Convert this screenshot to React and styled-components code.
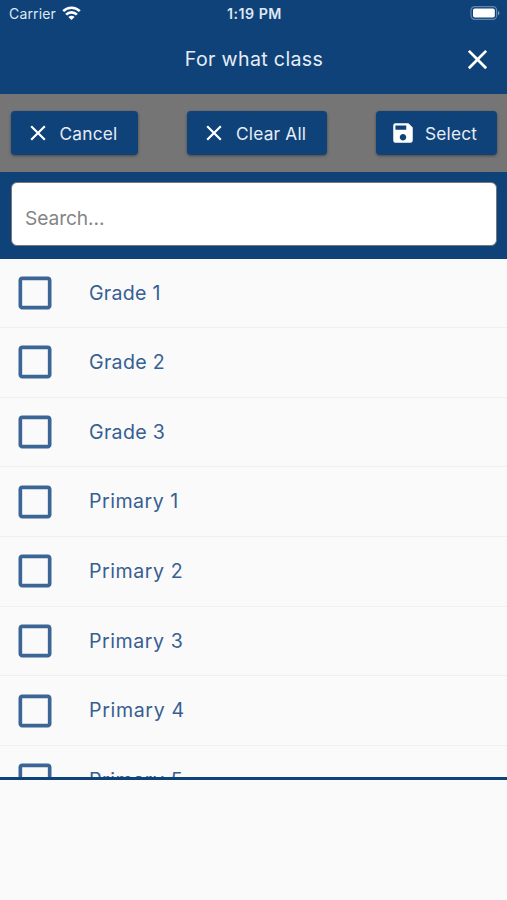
import styled, {createGlobalStyle} from "styled-components"
import {MdClose, MdSave, MdCheckBoxOutlineBlank} from "react-icons/md"


const blue = "#10427a"

const GlobalStyle = createGlobalStyle`
    * {
        box-sizing: border-box;
    }

    body {
        margin: 0;
        background: #fafafa;
        font-family: Inter, "Liberation Sans", sans-serif;
    }

    svg {
        display: block;
        flex: none;
    }
`

const Screen = styled.div`
    display: flex;
    flex-direction: column;
    width: 507px;
    height: 900px;
    overflow: hidden;
    background: #fafafa;
`

const StatusBar = styled.div`
    display: grid;
    grid-template-columns: 1fr auto 1fr;
    align-items: center;
    height: 26px;
    padding: 0 7px 0 9px;
    background: ${blue};
    color: #dfe8f3;
`

const Carrier = styled.div`
    display: flex;
    align-items: center;
    gap: 6px;
    font-size: 14px;
    letter-spacing: 0.15px;
`

const Clock = styled.div`
    font-size: 14.2px;
    font-weight: 600;
    letter-spacing: 0.5px;
`

const BatterySlot = styled.div`
    justify-self: end;
`

const Header = styled.header`
    display: grid;
    grid-template-columns: 32px 1fr 32px;
    align-items: center;
    height: 68px;
    padding: 0 14px 2px 13px;
    background: ${blue};
    color: #fff;
`

const Title = styled.h1`
    grid-column: 2;
    margin: 0;
    padding: 0 0 1px 2px;
    text-align: center;
    color: #e6edf5;
    font-size: 19.6px;
    font-weight: 400;
    line-height: 24px;
    letter-spacing: 0.35px;
`

const Toolbar = styled.div`
    display: flex;
    justify-content: space-between;
    align-items: flex-start;
    height: 78px;
    padding: 17px 10px 0 11px;
    background: #757575;
`

const Button = styled.button`
    display: flex;
    align-items: center;
    gap: 9px;
    width: ${props => props.$width}px;
    height: 44px;
    padding: 0 0 0 ${props => props.$inset || 14}px;
    border: 0;
    border-radius: 4px;
    background: ${blue};
    box-shadow: 0 1px 3px rgba(0, 0, 0, 0.4);
    color: #fff;
    font: inherit;
    font-size: 17.3px;
    letter-spacing: 0.2px;
    white-space: nowrap;

    span {
        color: #e6edf5;
    }
`

const SearchBar = styled.div`
    height: 87px;
    padding: 10px 10px 0 11px;
    background: ${blue};
`

const SearchInput = styled.input`
    display: block;
    width: 100%;
    height: 64px;
    padding: 8px 13px 0;
    border: 1px solid #76777a;
    border-radius: 6px;
    background: #fff;
    color: #333;
    font: inherit;
    font-size: 19.2px;
    letter-spacing: -0.1px;
    outline: none;

    &::placeholder {
        color: #858585;
        opacity: 1;
    }
`

const List = styled.ul`
    height: 521px;
    margin: 0;
    padding: 0;
    list-style: none;
    overflow: hidden;
    border-bottom: 3px solid ${blue};
`

const Row = styled.li`
    display: flex;
    align-items: center;
    gap: 32px;
    height: 69.7px;
    padding: 0 13px;
    border-bottom: 1px solid #f0f0f0;
    color: #3a6594;

    &:first-child {
        height: 69px;
    }
`

const Label = styled.span`
    padding-bottom: 1px;
    color: #375f92;
    font-size: 19.6px;
    line-height: 24px;
    letter-spacing: ${props => props.$spacing}px;
`

function WifiIcon() {
    return (
        <svg width="19" height="14" viewBox="0 0 19 14" fill="none" stroke="#fff" strokeWidth="2.6">
            <path d="M1.2 5.2a11.8 11.8 0 0 1 16.6 0"/>
            <path d="M4.1 8.6a7.6 7.6 0 0 1 10.8 0"/>
            <path d="M9.5 13.9 6.4 11a4.3 4.3 0 0 1 6.2 0z" fill="#fff" stroke="none"/>
        </svg>
    )
}

function BatteryIcon() {
    return (
        <svg width="30" height="14" viewBox="0 0 30 14">
            <rect x="1" y="0.7" width="25.6" height="12.6" rx="3.6" fill="none" stroke="#6485ad" strokeWidth="1.2"/>
            <rect x="3" y="2.5" width="21.8" height="9" rx="1.8" fill="#fff"/>
            <path d="M28 4.7c1.9.8 1.9 3.8 0 4.6z" fill="#7f9bbc"/>
        </svg>
    )
}


const classes = [
    {name: "Grade 1", spacing: 0.25},
    {name: "Grade 2", spacing: 0.3},
    {name: "Grade 3", spacing: 0.3},
    {name: "Primary 1", spacing: 0.5},
    {name: "Primary 2", spacing: 0.55},
    {name: "Primary 3", spacing: 0.55},
    {name: "Primary 4", spacing: 0.65},
    {name: "Primary 5", spacing: 0.55},
]


export default function App() {
    return (
        <Screen>
            <GlobalStyle/>
            <StatusBar>
                <Carrier>Carrier <WifiIcon/></Carrier>
                <Clock>1:19 PM</Clock>
                <BatterySlot><BatteryIcon/></BatterySlot>
            </StatusBar>

            <Header>
                <Title>For what class</Title>
                <MdClose size={33}/>
            </Header>

            <Toolbar>
                <Button $width={127} $inset={13.5}><MdClose size={26}/><span>Cancel</span></Button>
                <Button $width={140} $inset={14}><MdClose size={26}/><span>Clear All</span></Button>
                <Button $width={121}><MdSave size={26}/><span>Select</span></Button>
            </Toolbar>

            <SearchBar>
                <SearchInput type="text" placeholder="Search..."/>
            </SearchBar>

            <List>
                {
                    classes.map(item => (
                        <Row key={item.name}>
                            <MdCheckBoxOutlineBlank size={44}/>
                            <Label $spacing={item.spacing}>{item.name}</Label>
                        </Row>
                    ))
                }
            </List>
        </Screen>
    );
}
